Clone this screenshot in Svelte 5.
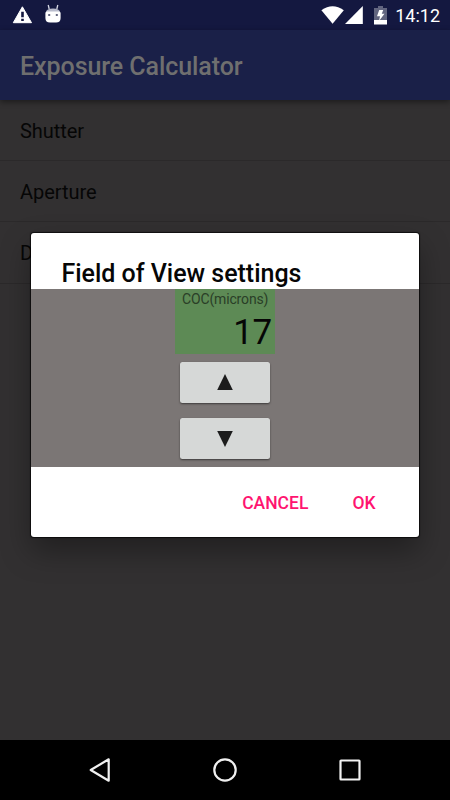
<script lang="ts">
  const items = ["Shutter", "Aperture", "D"];

  let coc = $state(17);
  let open = $state(true);

  function step(by: number) {
    coc = Math.max(1, coc + by);
  }
  function close() {
    open = false;
  }
</script>

<div class="screen">
  <header class="status">
    <div class="group">
      <svg class="warn" width="20" height="18" viewBox="0 0 20 18">
        <path
          d="M10.4.8 19.5 16.7H1.3Z"
          fill="#fff"
          stroke="#fff"
          stroke-width="1"
          stroke-linejoin="round"
        />
        <path d="M9.2 5.8h2.6v5.4H9.2zM9.2 12.8h2.6v2.2H9.2z" fill="#141840" />
      </svg>
      <svg class="droid" width="16" height="19" viewBox="0 0 16 19">
        <path d="M3.2 1 4.2 5M12.8 1 11.8 5" stroke="#d6d8e4" stroke-width="1.3" />
        <path d="M1 8Q1.5 4.5 8 4.5T15 8Z" fill="#b9bccc" />
        <path
          d="M.4 9Q.4 7.5 2 7.5H14Q15.6 7.5 15.6 9V14Q15.6 18.5 11 18.5H5Q.4 18.5 .4 14Z"
          fill="#fff"
        />
        <path d="M3.2 10h2v2h-2zM10.8 10h2v2h-2z" fill="#63667f" />
      </svg>
    </div>
    <div class="group">
      <svg width="24" height="18" viewBox="0 0 24 18">
        <path d="M1.4 4.2Q12.6-3.8 23.8 4.2L12.6 17.8Z" fill="#fff" />
      </svg>
      <svg class="signal" width="18" height="18" viewBox="0 0 18 18">
        <path d="M17.8 0V18H0Z" fill="#fff" />
      </svg>
      <svg class="battery" width="13" height="19" viewBox="0 0 13 19">
        <path d="M0 2H4V0H9V2H13V14H0Z" fill="#62657f" />
        <path d="M0 14H13V18.5H0Z" fill="#fff" />
        <path d="M5.2 4H9.2L7.8 7.7H10.5L5 15 6 10.2H3Z" fill="#fff" />
      </svg>
      <span class="clock">14:12</span>
    </div>
  </header>

  <div class="appbar">Exposure Calculator</div>

  <main>
    {#each items as item (item)}
      <div class="row">{item}</div>
    {/each}
  </main>

  <nav>
    <svg width="24" height="26" viewBox="0 0 24 26">
      <path d="M20.7 2.3V23.7L2.7 13Z" />
    </svg>
    <svg width="24" height="26" viewBox="0 0 24 26">
      <circle cx="12" cy="13" r="10.7" />
    </svg>
    <svg width="24" height="26" viewBox="0 0 24 26">
      <rect x="2.5" y="3.5" width="19" height="19" rx="0.5" />
    </svg>
  </nav>

  {#if open}
    <div class="dialog" role="dialog" aria-label="Field of View settings">
      <h2>Field of View settings</h2>
      <div class="content">
        <div class="field">
          <span class="label">COC(microns)</span>
          <span class="value">{coc}</span>
        </div>
        <button class="step" aria-label="Increase" onclick={() => step(1)}>
          <svg width="16" height="17" viewBox="0 0 16 17">
            <path d="M8 0 15.8 16H.2Z" />
          </svg>
        </button>
        <button class="step" aria-label="Decrease" onclick={() => step(-1)}>
          <svg width="16" height="17" viewBox="0 0 16 17">
            <path d="M8 17 15.8 1H.2Z" />
          </svg>
        </button>
      </div>
      <div class="actions">
        <button onclick={close}>CANCEL</button>
        <button onclick={close}>OK</button>
      </div>
    </div>
  {/if}
</div>

<style>
  .screen {
    position: relative;
    display: flex;
    flex-direction: column;
    width: 450px;
    height: 800px;
    overflow: hidden;
    background: #323031;
    font-family: Roboto, sans-serif;
  }
  svg {
    display: block;
    flex: none;
  }
  .status {
    display: flex;
    justify-content: space-between;
    height: 30px;
    padding: 0 10px 0 12px;
    box-sizing: border-box;
    background: #141840;
  }
  .group {
    display: flex;
    align-items: flex-start;
  }
  .group svg {
    margin-top: 6px;
  }
  .group .droid {
    margin: 4px 0 0 13px;
  }
  .group .signal {
    margin-left: 1px;
  }
  .group .battery {
    margin-left: 11px;
  }
  .clock {
    margin-left: 8px;
    color: #fff;
    font-size: 18px;
    line-height: 31px;
  }
  .appbar {
    position: relative;
    height: 70px;
    padding-left: 20px;
    background: #1a2048;
    box-shadow: 0 2px 6px rgba(0, 0, 0, 0.45);
    color: #6f6f6f;
    font-size: 25px;
    font-weight: 500;
    letter-spacing: -0.07px;
    line-height: 74px;
  }
  main {
    flex: 1;
  }
  .row {
    height: 60.2px;
    padding-left: 20px;
    border-bottom: 1px solid #2b292a;
    color: #060606;
    font-size: 20px;
    letter-spacing: -0.05px;
    line-height: 63px;
  }
  nav {
    display: flex;
    justify-content: center;
    align-items: center;
    gap: 101px;
    height: 60px;
    background: #000;
  }
  nav svg {
    fill: none;
    stroke: #f0f0f0;
    stroke-width: 2.2;
    stroke-linejoin: round;
  }
  .dialog {
    position: absolute;
    top: 233px;
    left: 31px;
    width: 388px;
    height: 304px;
    display: flex;
    flex-direction: column;
    background: #fff;
    border-radius: 3px;
    box-shadow:
      0 0 1px 1px rgba(0, 0, 0, 0.7),
      0 14px 30px rgba(0, 0, 0, 0.35);
  }
  h2 {
    height: 56px;
    margin: 0;
    padding: 26px 0 0 30.5px;
    box-sizing: border-box;
    color: #060606;
    font-size: 25px;
    font-weight: 500;
    letter-spacing: -0.02px;
    line-height: 30px;
  }
  .content {
    display: flex;
    flex-direction: column;
    align-items: center;
    height: 177.5px;
    background: #7b7675;
  }
  .field {
    display: flex;
    flex-direction: column;
    flex: none;
    width: 100px;
    height: 65px;
    margin-bottom: 8px;
    background: #5d8a55;
  }
  .label {
    padding-left: 7px;
    color: #2a3e27;
    font-size: 14px;
    letter-spacing: -0.15px;
    line-height: 20px;
    white-space: nowrap;
  }
  .value {
    padding-right: 3px;
    color: #060606;
    font-size: 35px;
    letter-spacing: -0.3px;
    line-height: 48px;
    text-align: right;
  }
  .step {
    display: flex;
    flex: none;
    align-items: center;
    justify-content: center;
    width: 90px;
    height: 41px;
    margin-bottom: 15px;
    padding: 0;
    border: none;
    border-radius: 2.5px;
    background: #d6d8d7;
    box-shadow: 0 1px 2px rgba(0, 0, 0, 0.5);
  }
  .step path {
    fill: #1c1c1c;
  }
  .actions {
    display: flex;
    flex: 1;
    align-items: center;
    justify-content: flex-end;
    gap: 44px;
    padding: 2px 43.5px 0 0;
  }
  .actions button {
    padding: 0;
    border: none;
    background: none;
    color: #ff1470;
    font: 500 17.5px Roboto, sans-serif;
  }
</style>
